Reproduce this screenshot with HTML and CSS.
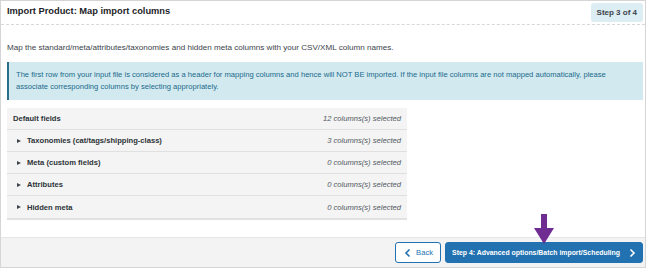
FILE: index.html
```html
<!DOCTYPE html>
<html lang="en">
<head>
  <meta charset="UTF-8">
  <link rel="stylesheet" href="styles.css">
  <title>Import Product</title>
</head>
<body>
  <div class="wizard">
    <div class="wizard_head">
      <h2>Import Product: Map import columns</h2>
      <span class="step">Step 3 of 4</span>
    </div>
    <div class="wizard_body">
      <p class="lead">Map the standard/meta/attributes/taxonomies and hidden meta columns with your CSV/XML column names.</p>
      <div class="notice">The first row from your input file is considered as a header for mapping columns and hence will NOT BE imported. If the input file columns are not mapped automatically, please associate corresponding columns by selecting appropriately.</div>
      <ul class="mapping">
        <li class="open"><span class="name">Default fields</span><span class="count">12 columns(s) selected</span></li>
        <li><span class="name"><i class="caret"></i>Taxonomies (cat/tags/shipping-class)</span><span class="count">3 columns(s) selected</span></li>
        <li><span class="name"><i class="caret"></i>Meta (custom fields)</span><span class="count">0 columns(s) selected</span></li>
        <li><span class="name"><i class="caret"></i>Attributes</span><span class="count">0 columns(s) selected</span></li>
        <li><span class="name"><i class="caret"></i>Hidden meta</span><span class="count">0 columns(s) selected</span></li>
      </ul>
    </div>
    <div class="wizard_foot">
      <button class="btn btn_back">
        <svg width="8" height="10" viewBox="0 0 8 10"><path d="M5.5 1.5 2 5l3.5 3.5" fill="none" stroke="#2271b1" stroke-width="1.6"/></svg>
        Back
      </button>
      <button class="btn btn_next">
        Step 4: Advanced options/Batch import/Scheduling
        <svg width="8" height="10" viewBox="0 0 8 10"><path d="M2.5 1.5 6 5 2.5 8.5" fill="none" stroke="#fff" stroke-width="1.6"/></svg>
      </button>
      <svg class="pointer" width="22" height="31" viewBox="0 0 22 31"><path d="M8 0h6v14h7L11 30 1 14h7z" fill="#6f2c91"/></svg>
    </div>
  </div>
</body>
</html>
```

FILE: styles.css
```css
* {
  box-sizing: border-box;
}
html, body, h2, p, ul, li {
  margin: 0;
  padding: 0;
}
ul {
  list-style: none;
}
body {
  font-family: "Liberation Sans", Arial, sans-serif;
  color: #3c434a;
  background: #fff;
}
.wizard {
  width: 646px;
  height: 268px;
  border: 1px solid #d5d5d5;
  display: flex;
  flex-direction: column;
}
.wizard_head {
  display: flex;
  align-items: center;
  justify-content: space-between;
  height: 24px;
  padding: 0 2px 0 6px;
  border-bottom: 1px dashed #d8d8d8;
}
.wizard_head h2 {
  font-size: 9.3px;
  font-weight: bold;
  color: #1d2327;
  margin-top: -3px;
}
.step {
  background: #dcedf4;
  border-radius: 3px;
  padding: 5px 6px;
  font-size: 8px;
  font-weight: bold;
  color: #3c434a;
}
.wizard_body {
  flex: 1;
  padding: 18px 2px 0 6px;
}
.lead {
  font-size: 8.1px;
  color: #3c434a;
}
.notice {
  margin-top: 10px;
  background: #d1e9ef;
  border-left: 2px solid #2a6f89;
  padding: 7px 8px 7px 7px;
  font-size: 7.6px;
  line-height: 12px;
  color: #216a8c;
}
.mapping {
  margin-top: 8px;
  width: 400px;
  background: #f4f4f4;
  border-bottom: 2px solid #e2e2e2;
}
.mapping li {
  display: flex;
  justify-content: space-between;
  align-items: center;
  height: 22px;
  padding: 0 6px 0 6px;
  border-bottom: 1px solid #e0e0e0;
  font-size: 7.6px;
}
.mapping li:last-child {
  border-bottom: none;
}
.mapping .name {
  font-weight: bold;
  color: #2c3338;
  display: flex;
  align-items: center;
}
.mapping li .name {
  padding-left: 4px;
}
.mapping li.open .name {
  padding-left: 0;
}
.caret {
  display: inline-block;
  width: 0;
  height: 0;
  border-top: 2.5px solid transparent;
  border-bottom: 2.5px solid transparent;
  border-left: 4px solid #3c434a;
  margin-right: 6px;
}
.count {
  font-style: italic;
  color: #50575e;
}
.wizard_foot {
  position: relative;
  display: flex;
  justify-content: flex-end;
  align-items: center;
  gap: 4px;
  height: 30px;
  padding: 0 2px 0 6px;
  background: #f3f3f3;
  border-top: 1px solid #e6e6e6;
}
.btn {
  display: flex;
  align-items: center;
  gap: 4px;
  height: 21px;
  border-radius: 3px;
  font-family: inherit;
  font-size: 7.6px;
  padding: 0 9px;
  white-space: nowrap;
  cursor: pointer;
}
.btn_back {
  background: #fff;
  border: 1px solid #2271b1;
  color: #2271b1;
  padding: 0 7px 0 8px;
}
.btn_next {
  background: #2271b1;
  border: 1px solid #2271b1;
  color: #fff;
  font-weight: bold;
  font-size: 6.9px;
  width: 198px;
  justify-content: center;
  gap: 8px;
  padding: 0;
}
.pointer {
  position: absolute;
  left: 532px;
  top: -24px;
}
```
